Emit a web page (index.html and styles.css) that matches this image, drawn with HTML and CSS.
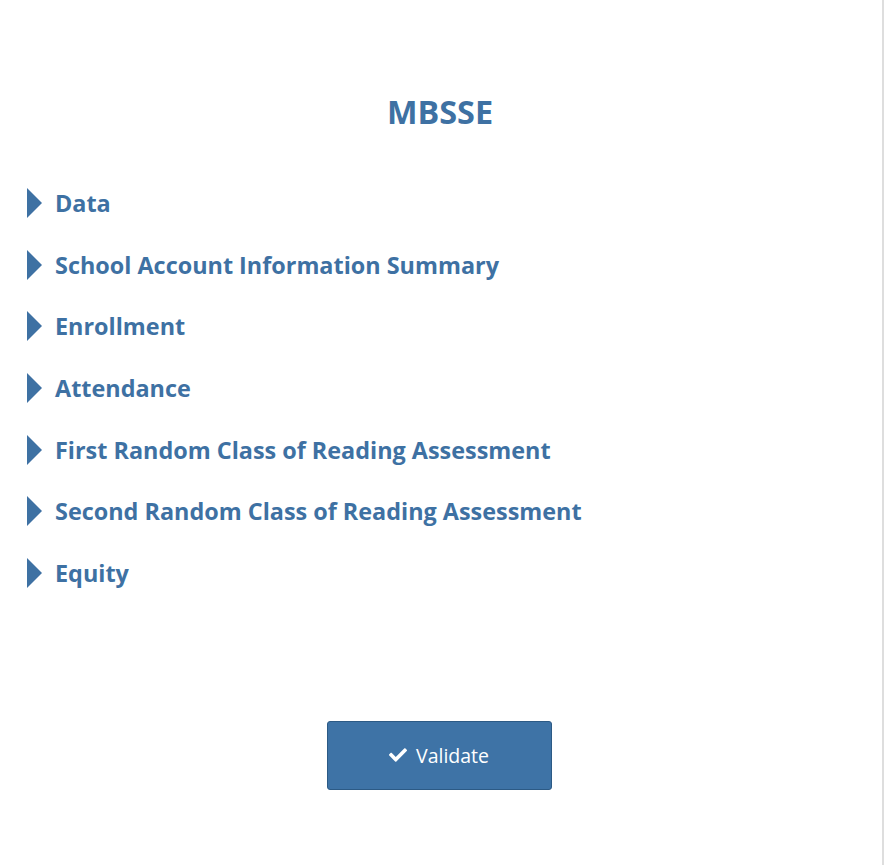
FILE: index.html
```html
<!DOCTYPE html>
<html>
<head>
<meta charset="utf-8">
<link rel="stylesheet" href="styles.css">
</head>
<body>
<div class="page">
  <h1 class="title">MBSSE</h1>
  <ul class="sections">
    <li class="section"><span class="caret"></span><span class="label">Data</span></li>
    <li class="section"><span class="caret"></span><span class="label">School Account Information Summary</span></li>
    <li class="section"><span class="caret"></span><span class="label">Enrollment</span></li>
    <li class="section"><span class="caret"></span><span class="label">Attendance</span></li>
    <li class="section"><span class="caret"></span><span class="label">First Random Class of Reading Assessment</span></li>
    <li class="section"><span class="caret"></span><span class="label">Second Random Class of Reading Assessment</span></li>
    <li class="section"><span class="caret"></span><span class="label">Equity</span></li>
  </ul>
  <div class="actions">
    <button class="validate">
      <svg class="check" viewBox="0 0 512 512" width="18" height="18"><path fill="#fff" d="M173.9 439.4L7.5 273c-10-10-10-26.2 0-36.2l36.2-36.2c10-10 26.2-10 36.2 0L192 312.7 432.1 72.6c10-10 26.2-10 36.2 0l36.2 36.2c10 10 10 26.2 0 36.2L210.1 439.4c-10 10-26.2 10-36.2 0z"/></svg>
      <span>Validate</span>
    </button>
  </div>
</div>
</body>
</html>
```

FILE: styles.css
```css
html, body {
  margin: 0;
  padding: 0;
  background: #fff;
}
body {
  font-family: "Open Sans", "Liberation Sans", sans-serif;
  color: #3e71a3;
}
.page {
  width: 882px;
  min-height: 865px;
  border-right: 2px solid #dedede;
  box-sizing: content-box;
}
.title {
  margin: 0;
  padding-top: 91px;
  padding-right: 2px;
  text-align: center;
  font-size: 32.4px;
  font-weight: 700;
  line-height: 40px;
  color: #3e71a3;
}
.sections {
  list-style: none;
  margin: 57px 0 0;
  padding: 0 0 0 27px;
}
.section {
  display: flex;
  align-items: center;
  height: 30px;
  margin-bottom: 31.7px;
}
.caret {
  width: 0;
  height: 0;
  border-top: 15px solid transparent;
  border-bottom: 15px solid transparent;
  border-left: 15px solid #3e71a3;
  margin-right: 13px;
}
.label {
  font-size: 23.4px;
  font-weight: 700;
  line-height: 30px;
}
.actions {
  display: flex;
  justify-content: center;
  padding-top: 101px;
  padding-right: 4px;
}
.validate {
  width: 225px;
  height: 69px;
  background: #3e73a6;
  border: 1px solid #2c5a85;
  border-radius: 3px;
  color: #fff;
  font-family: "Open Sans", "Liberation Sans", sans-serif;
  font-size: 19.5px;
  display: flex;
  align-items: center;
  justify-content: center;
  gap: 9px;
  padding: 0;
}
.check {
  display: block;
}
```
